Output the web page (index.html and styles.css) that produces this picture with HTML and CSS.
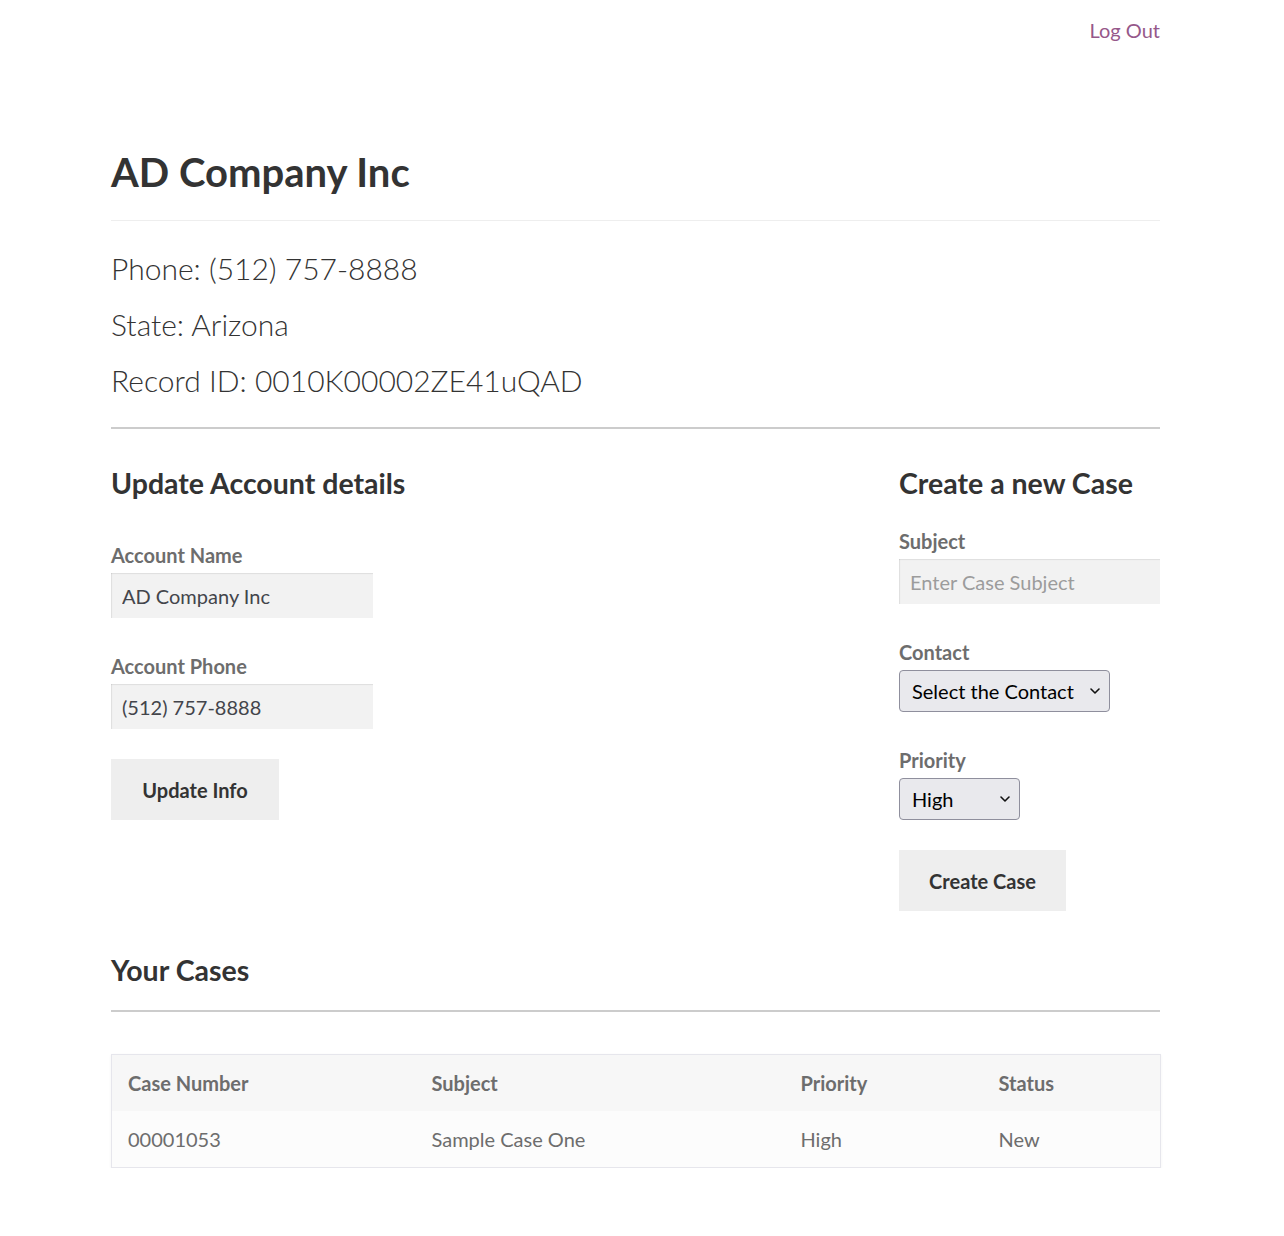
FILE: index.html
```html
<!DOCTYPE html>
<html lang="en">
<head>
<meta charset="utf-8">
<title>AD Company Inc</title>
<link rel="stylesheet" href="styles.css">
</head>
<body>
<div class="page">
  <header class="topbar">
    <a class="logout" href="#">Log Out</a>
  </header>

  <main class="content">
    <h1 class="account-title">AD Company Inc</h1>
    <div class="account-info">
      <p class="info-line">Phone: (512) 757-8888</p>
      <p class="info-line">State: Arizona</p>
      <p class="info-line">Record ID: 0010K00002ZE41uQAD</p>
    </div>

    <div class="forms">
      <section class="form-col form-update">
        <h2 class="section-title">Update Account details</h2>
        <div class="field field-first">
          <label class="field-label" for="acc-name">Account Name</label>
          <input class="text-input" id="acc-name" type="text" value="AD Company Inc">
        </div>
        <div class="field">
          <label class="field-label" for="acc-phone">Account Phone</label>
          <input class="text-input" id="acc-phone" type="text" value="(512) 757-8888">
        </div>
        <button class="btn btn-update" type="button">Update Info</button>
      </section>

      <section class="form-col form-case">
        <h2 class="section-title">Create a new Case</h2>
        <div class="field field-first-case">
          <label class="field-label" for="case-subject">Subject</label>
          <input class="text-input text-input-wide" id="case-subject" type="text" placeholder="Enter Case Subject">
        </div>
        <div class="field">
          <label class="field-label" for="case-contact">Contact</label>
          <span class="select-wrap select-contact">
            <select class="select" id="case-contact">
              <option>Select the Contact</option>
            </select>
            <svg class="chev" width="12" height="8" viewBox="0 0 12 8"><path d="M2 2 L6 6 L10 2" fill="none" stroke="#111" stroke-width="1.6" stroke-linecap="round" stroke-linejoin="round"/></svg>
          </span>
        </div>
        <div class="field">
          <label class="field-label" for="case-priority">Priority</label>
          <span class="select-wrap select-priority">
            <select class="select" id="case-priority">
              <option>High</option>
              <option>Medium</option>
              <option>Low</option>
            </select>
            <svg class="chev" width="12" height="8" viewBox="0 0 12 8"><path d="M2 2 L6 6 L10 2" fill="none" stroke="#111" stroke-width="1.6" stroke-linecap="round" stroke-linejoin="round"/></svg>
          </span>
        </div>
        <button class="btn btn-create" type="button">Create Case</button>
      </section>
    </div>

    <h2 class="section-title cases-title">Your Cases</h2>
    <div class="cases-rule"></div>

    <table class="cases">
      <colgroup>
        <col class="c1"><col class="c2"><col class="c3"><col class="c4">
      </colgroup>
      <thead>
        <tr><th>Case Number</th><th>Subject</th><th>Priority</th><th>Status</th></tr>
      </thead>
      <tbody>
        <tr><td>00001053</td><td>Sample Case One</td><td>High</td><td>New</td></tr>
      </tbody>
    </table>
  </main>
</div>
</body>
</html>
```

FILE: styles.css
```css
* { box-sizing: border-box; }

html, body {
  margin: 0;
  padding: 0;
  background: #ffffff;
}

body {
  font-family: "Lato", "Open Sans", "Liberation Sans", sans-serif;
  color: #6d6d6d;
  -webkit-font-smoothing: antialiased;
}

.page {
  width: 1049px;
  margin-left: 111px;
}

.topbar {
  display: flex;
  justify-content: flex-end;
  padding-top: 17px;
  height: 44px;
}

.logout {
  color: #96588a;
  text-decoration: none;
  font-size: 20px;
  line-height: 26px;
}

.account-title {
  margin: 103px 0 0;
  font-size: 40px;
  line-height: 50px;
  font-weight: 700;
  color: #333333;
  padding-bottom: 23px;
  border-bottom: 1px solid #eeeeee;
}

.account-info {
  padding-top: 19px;
  padding-bottom: 19px;
  border-bottom: 2px solid #cccccc;
}

.info-line {
  margin: 0;
  font-size: 30px;
  line-height: 56px;
  font-weight: 300;
  color: #333333;
}

.forms {
  display: flex;
  justify-content: space-between;
  padding-top: 35px;
}

.form-update {
  width: 320px;
}

.form-case {
  width: 261px;
}

.section-title {
  margin: 0;
  font-size: 28.5px;
  line-height: 38px;
  font-weight: 700;
  color: #333333;
}

.field {
  display: flex;
  flex-direction: column;
  align-items: flex-start;
  margin-top: 35px;
}

.field-first { margin-top: 40px; }
.field-first-case { margin-top: 26px; }

.field-label {
  font-size: 20px;
  line-height: 26px;
  font-weight: 700;
  color: #6d6d6d;
  margin-bottom: 5px;
}

.text-input {
  width: 262px;
  height: 45px;
  padding: 0 11px;
  border: 0;
  background: #f2f2f2;
  box-shadow: inset 0 2px 1px -1px rgba(0,0,0,0.08), inset 2px 0 1px -1px rgba(0,0,0,0.08);
  font-family: inherit;
  font-size: 20px;
  color: #43454b;
  outline: none;
}

.text-input-wide { width: 261px; }

.text-input::placeholder { color: #9c9c9c; }

.select-wrap {
  position: relative;
  display: inline-block;
}

.select {
  -webkit-appearance: none;
  appearance: none;
  display: block;
  height: 42px;
  border: 1px solid #8f8f9d;
  border-radius: 4px;
  background: #e9e9ed;
  color: #000000;
  font-family: inherit;
  font-size: 20px;
  padding: 0 30px 0 12px;
}

.select-contact .select { width: 211px; }
.select-priority .select { width: 121px; }

.chev {
  position: absolute;
  right: 9px;
  top: 17px;
  pointer-events: none;
}

.btn {
  display: block;
  height: 61px;
  border: 0;
  background: #eeeeee;
  color: #333333;
  font-family: inherit;
  font-size: 20px;
  font-weight: 700;
  padding: 0;
}

.btn-update { width: 168px; margin-top: 30px; }
.btn-create { width: 167px; margin-top: 30px; }

.cases-title {
  margin-top: 40px;
}

.cases-rule {
  height: 2px;
  background: #cccccc;
  margin-top: 21px;
}

.cases {
  margin-top: 42px;
  width: 1049px;
  border-collapse: collapse;
  table-layout: fixed;
  border: 1px solid #e6e6ec;
  box-shadow: 0 1px 3px rgba(0,0,0,0.05);
  font-size: 20px;
}

.c1 { width: 304px; }
.c2 { width: 369px; }
.c3 { width: 198px; }
.c4 { width: 178px; }

.cases th, .cases td {
  text-align: left;
  padding: 0 16px;
  color: #6d6d6d;
}

.cases th {
  height: 56px;
  background: #f7f7f7;
  font-weight: 700;
}

.cases td {
  height: 57px;
  background: #fcfcfc;
  font-weight: 400;
}
```
